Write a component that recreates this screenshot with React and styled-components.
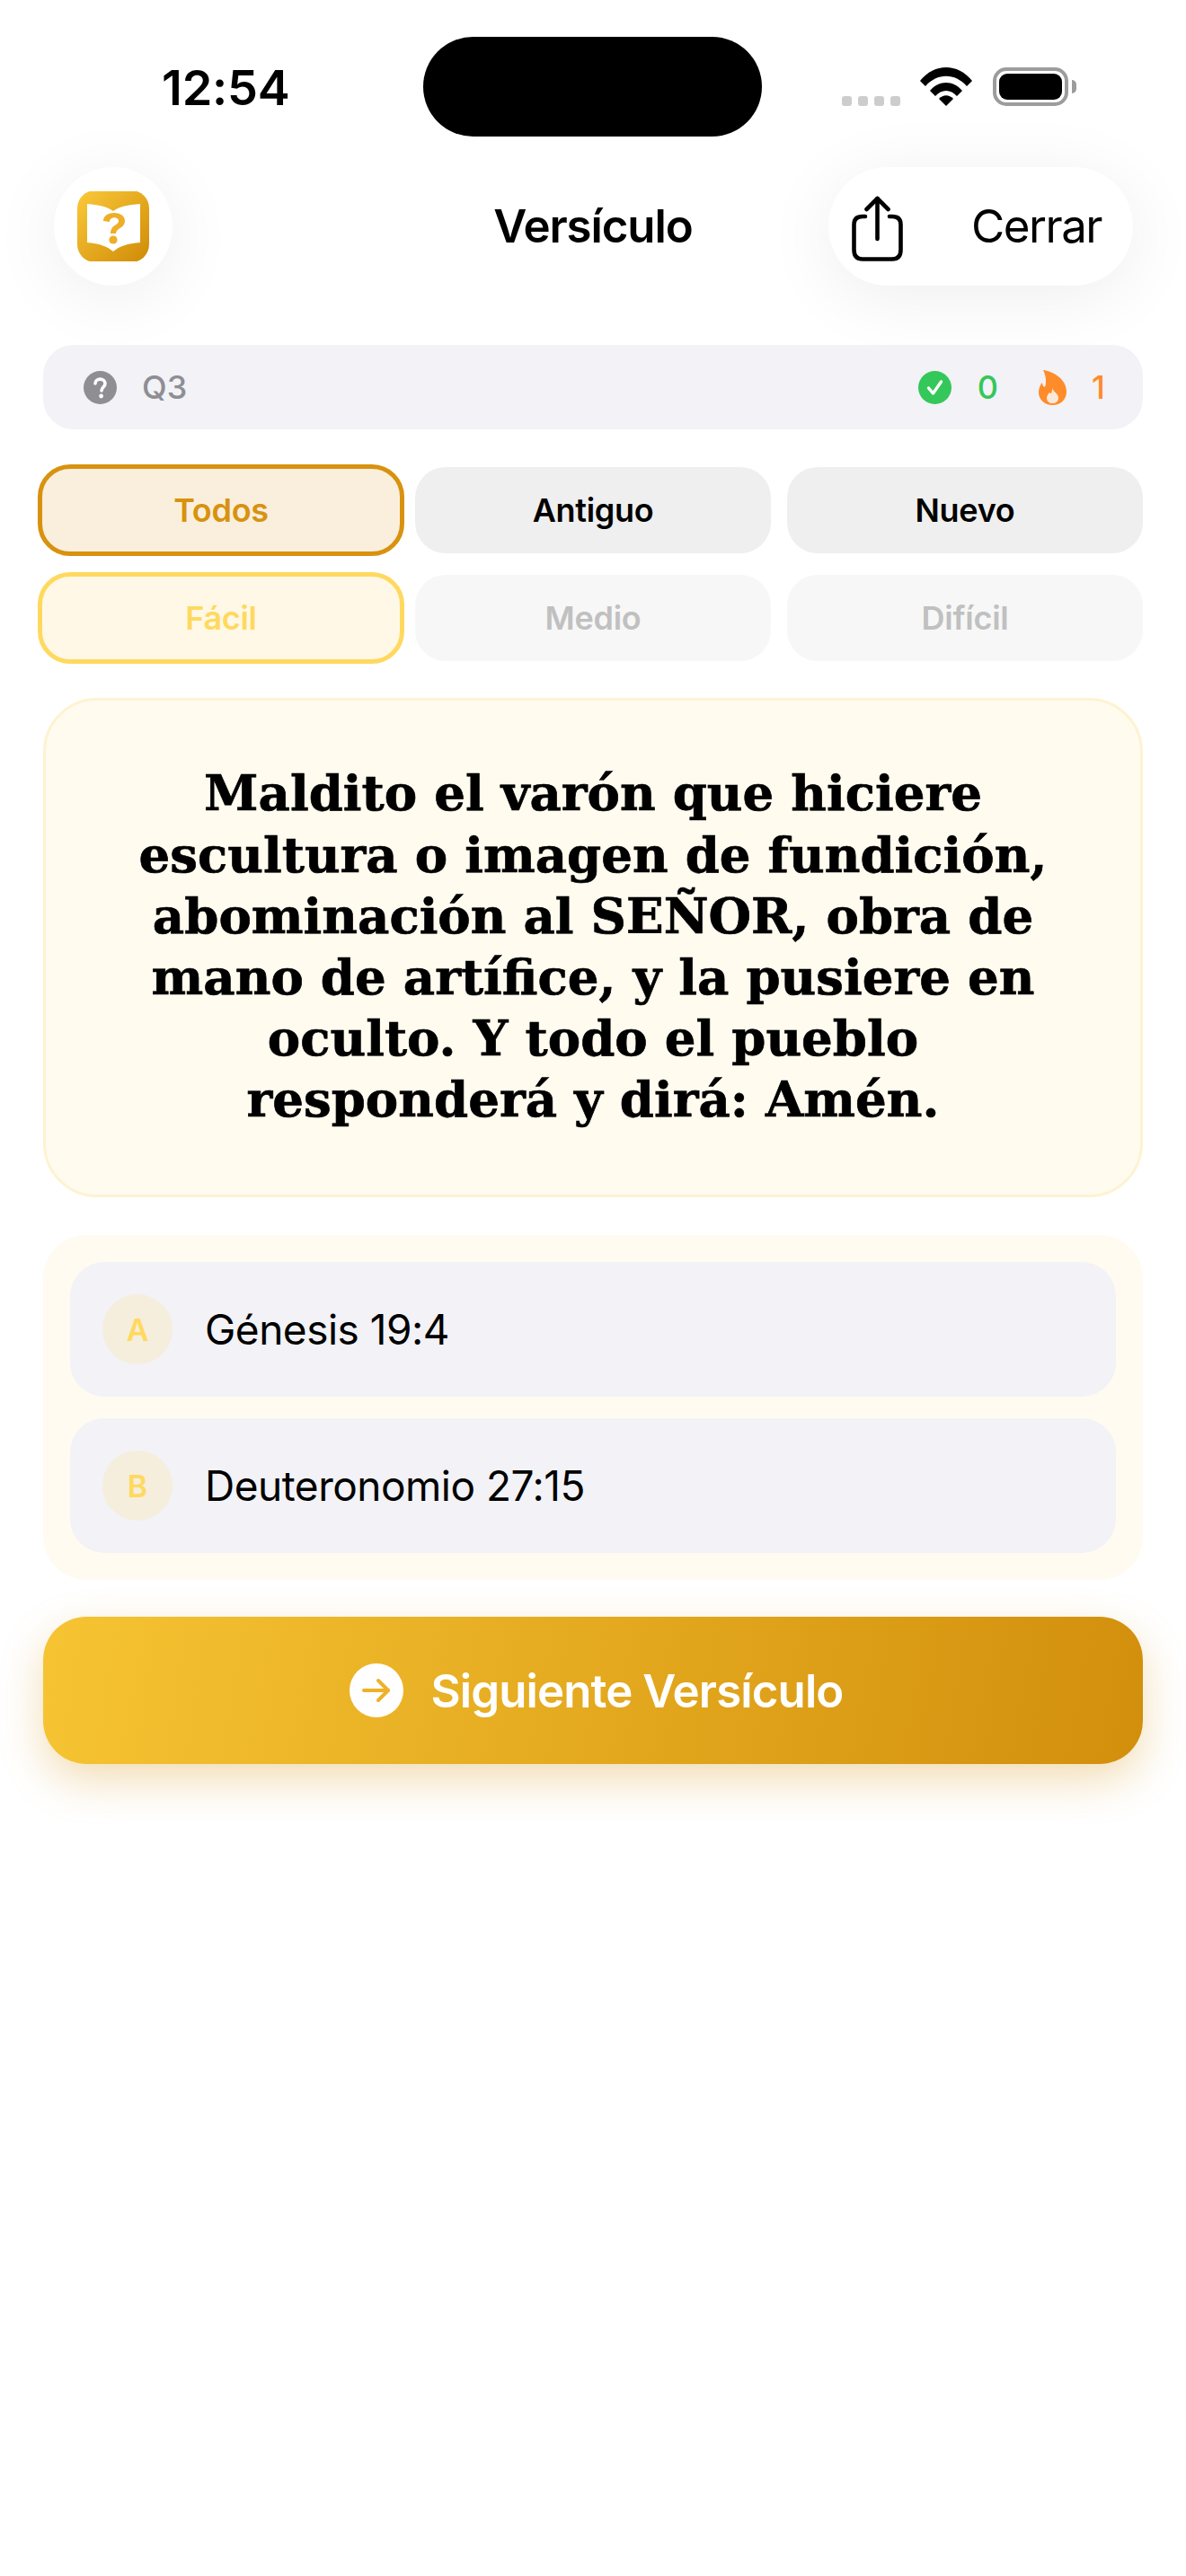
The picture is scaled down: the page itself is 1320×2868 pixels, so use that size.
import React from 'react';
import styled, { createGlobalStyle } from 'styled-components';

const GlobalStyle = createGlobalStyle`
  html, body {
    margin: 0;
    padding: 0;
    background: #fff;
  }
  * {
    box-sizing: border-box;
  }
`;

const Page = styled.div`
  width: 1320px;
  height: 2868px;
  background: #fff;
  font-family: Inter, 'Liberation Sans', sans-serif;
  color: #000;
  overflow: hidden;
`;

const StatusBar = styled.div`
  height: 186px;
  padding-top: 41px;
  margin-bottom: -186px;
  display: flex;
  align-items: flex-start;
`;

const Clock = styled.div`
  width: 471px;
  padding-left: 180px;
  font-size: 54px;
  line-height: 56px;
  margin-top: 29px;
  font-weight: 600;
  letter-spacing: -0.2px;
`;

const Island = styled.div`
  width: 377px;
  height: 111px;
  border-radius: 56px;
  background: #000;
`;

const StatusIcons = styled.div`
  display: flex;
  align-items: flex-end;
  margin-left: 89px;
  margin-top: 34px;
`;

const SignalDots = styled.div`
  display: flex;
  gap: 7px;
  margin-right: 22px;
`;

const SignalDot = styled.div`
  width: 11px;
  height: 11px;
  border-radius: 3px;
  background: #cdcdcd;
`;

const Battery = styled.div`
  position: relative;
  width: 84px;
  height: 43px;
  margin-left: 23px;
  padding: 3px 3px;
  border: 4px solid #9c9c9c;
  border-radius: 15px;
  background: #fff;
`;

const BatteryFill = styled.div`
  width: 100%;
  height: 100%;
  background: #000;
  border-radius: 9px;
`;

const BatteryCap = styled.div`
  position: absolute;
  right: -13px;
  top: 10px;
  width: 5px;
  height: 15px;
  border-radius: 0 5px 5px 0;
  background: #9c9c9c;
`;

const Header = styled.header`
  position: relative;
  z-index: 1;
  padding: 186px 60px 0;
  height: 318px;
  display: flex;
  align-items: center;
  justify-content: space-between;
`;

const LogoButton = styled.div`
  width: 132px;
  height: 132px;
  border-radius: 50%;
  background: #fff;
  box-shadow: 0 12px 80px rgba(0, 0, 0, 0.07);
  display: flex;
  align-items: center;
  justify-content: center;
`;

const Title = styled.h1`
  position: absolute;
  left: 0;
  right: 0;
  bottom: 39px;
  margin: 0;
  text-align: center;
  font-size: 51px;
  line-height: 54px;
  font-weight: 600;
  letter-spacing: -1.1px;
`;

const ActionPill = styled.div`
  width: 339px;
  height: 132px;
  margin-right: -1px;
  border-radius: 66px;
  background: #fff;
  box-shadow: 0 12px 80px rgba(0, 0, 0, 0.07);
  display: flex;
  align-items: center;
  padding-left: 26px;

  svg {
    margin-top: 5px;
  }
`;

const CloseLabel = styled.span`
  margin-left: 76px;
  font-size: 51px;
  line-height: 54px;
  font-weight: 400;
  letter-spacing: -1.5px;
`;

const Content = styled.main`
  padding: 66px 48px 0;
  display: flex;
  flex-direction: column;
`;

const StatsBar = styled.div`
  height: 94px;
  border-radius: 34px;
  background: #f2f2f7;
  padding: 0 42px 0 45px;
  display: flex;
  align-items: center;
  justify-content: space-between;
`;

const StatGroup = styled.div`
  display: flex;
  align-items: center;
`;

const StatValue = styled.span`
  font-size: 36px;
  line-height: 40px;
  font-weight: 500;
  color: ${(p) => p.$color};
  margin-left: ${(p) => p.$gap}px;
  margin-right: ${(p) => p.$after || 0}px;
`;

const Filters = styled.div`
  margin-top: 42px;
  display: grid;
  grid-template-columns: repeat(3, 396px);
  grid-auto-rows: 96px;
  column-gap: 18px;
  row-gap: 24px;
`;

const chipVariants = {
  plain: 'background: #efefef; color: #000;',
  picked: `
    margin: -3px -6px;
    background: #f9efdc;
    color: #d8920f;
    border: 5px solid #d8920f;
    border-radius: 36px;
  `,
  muted: 'background: #f7f7f7; color: #c0c0c0;',
  mutedPicked: `
    margin: -3px -6px;
    background: #fff8e6;
    color: #ffd95f;
    border: 5px solid #ffd95f;
    border-radius: 36px;
  `,
};

const FilterChip = styled.div`
  display: flex;
  align-items: center;
  justify-content: center;
  border-radius: 34px;
  font-size: 36px;
  font-weight: 600;
  letter-spacing: -0.3px;
  ${(p) => chipVariants[p.$variant]}
`;

const VerseCard = styled.section`
  margin-top: 41px;
  height: 556px;
  border: 3px solid #fdf3d2;
  border-radius: 60px;
  background: #fffbef;
  display: flex;
  align-items: center;
  justify-content: center;
  padding: 0 30px 2px;
`;

const VerseText = styled.p`
  margin: 0;
  text-align: center;
  font-family: 'DejaVu Serif', Georgia, serif;
  font-weight: 700;
  font-size: 54.6px;
  line-height: 68.2px;
  -webkit-text-stroke: 0.7px #000;
  color: #000;
`;

const AnswersPanel = styled.section`
  margin-top: 42px;
  padding: 30px;
  border-radius: 48px;
  background: #fffbf0;
  display: flex;
  flex-direction: column;
  gap: 24px;
`;

const AnswerRow = styled.div`
  height: 150px;
  border-radius: 38px;
  background: #f2f2f7;
  padding-left: 36px;
  display: flex;
  align-items: center;
  gap: 36px;
`;

const AnswerLetter = styled.div`
  width: 78px;
  height: 78px;
  border-radius: 50%;
  background: #f5eedd;
  color: #ffd95f;
  font-size: 34px;
  font-weight: 600;
  display: flex;
  align-items: center;
  justify-content: center;
`;

const AnswerText = styled.span`
  font-size: 46px;
  line-height: 54px;
  font-weight: 400;
  letter-spacing: -0.5px;
`;

const NextButton = styled.div`
  margin-top: 41px;
  height: 164px;
  border-radius: 48px;
  background: linear-gradient(100deg, #f6c433 0%, #d28f0c 100%);
  box-shadow: 0 18px 48px rgba(212, 144, 10, 0.3);
  color: #fff;
  padding-left: 8px;
  display: flex;
  align-items: center;
  justify-content: center;
  gap: 30px;
  font-size: 51px;
  font-weight: 600;
  letter-spacing: -0.9px;
`;

const ArrowCircle = styled.div`
  width: 60px;
  height: 60px;
  border-radius: 50%;
  background: #fff;
  display: flex;
  align-items: center;
  justify-content: center;
`;

function WifiIcon() {
  return (
    <svg width="58" height="43" viewBox="0 0 58 43">
      <path d="M0 15 C16 -5 42 -5 58 15 L52 21 C39 6 19 6 6 21 Z" fill="#000" />
      <path d="M11 26 C21 14 37 14 47 26 L41 32 C34 24 24 24 17 32 Z" fill="#000" />
      <path d="M21 35 C26 30 32 30 37 35 L29 43 Z" fill="#000" />
    </svg>
  );
}

function ShareIcon() {
  return (
    <svg width="57" height="73" viewBox="0 0 57 73" fill="none" stroke="#000" strokeWidth="4.6" strokeLinecap="round" strokeLinejoin="round">
      <path d="M15 23 H12 C6 23 2.5 26 2.5 32 V60 C2.5 67 6 70.5 12 70.5 H45 C51 70.5 54.5 67 54.5 60 V32 C54.5 26 51 23 45 23 H42" />
      <path d="M28.5 48 V3" />
      <path d="M16.5 15 L28.5 3 L40.5 15" />
    </svg>
  );
}

function BookLogo() {
  return (
    <svg width="80" height="78" viewBox="0 0 80 78">
      <defs>
        <linearGradient id="logoGold" x1="0" y1="0" x2="1" y2="1">
          <stop offset="0" stopColor="#fbc93a" />
          <stop offset="1" stopColor="#cf8b06" />
        </linearGradient>
      </defs>
      <rect x="0" y="-1" width="80" height="80" rx="20" fill="url(#logoGold)" />
      <path d="M11 14 C24 15 33 17 40 22 C47 17 56 15 70 14 V57 C56 58 47 61 40 67 C33 61 24 58 11 57 Z" fill="#fff" />
      <path d="M29 33 C29 21 53 21 53 33 C53 41 43 41 43 47 H37 C37 37 46 38 46 33 C46 28 36 28 36 34 Z" fill="#eeae27" />
      <circle cx="40" cy="54" r="4.6" fill="#eeae27" />
    </svg>
  );
}

function HelpIcon() {
  return (
    <svg width="37" height="37" viewBox="0 0 37 37">
      <circle cx="18.5" cy="18.5" r="18.5" fill="#8e8e93" />
      <path d="M13 14 C13 7.5 24 7.5 24 14 C24 18 20 18 20 22" fill="none" stroke="#fff" strokeWidth="3.6" strokeLinecap="round" />
      <circle cx="19.6" cy="28" r="2.4" fill="#fff" />
    </svg>
  );
}

function CheckIcon() {
  return (
    <svg width="37" height="37" viewBox="0 0 37 37">
      <circle cx="18.5" cy="18.5" r="18.5" fill="#34c759" />
      <path d="M11.5 19 L16.5 25 L25.5 12" fill="none" stroke="#fff" strokeWidth="3.4" strokeLinecap="round" strokeLinejoin="round" />
    </svg>
  );
}

function FlameIcon() {
  return (
    <svg width="31" height="39" viewBox="0 0 31 39">
      <path d="M5 0 C14 1 31 9 31 24 C31 33 24 39 15.5 39 C7 39 0 33 0 25 C0 20 2 16 4 14 C4 17 5 18 7 19 C9 13 8 6 5 0 Z" fill="#ff8c2a" />
      <path d="M15 20 C16 24 22 26 22 31 C22 35 19 37 15.5 37 C12 37 9 35 9 31 C9 28 11 27 12 25 C13 26 14 26 14 26 C15 24 15 22 15 20 Z" fill="#fbe9d7" />
    </svg>
  );
}

function ArrowIcon() {
  return (
    <svg width="32" height="28" viewBox="0 0 32 28" fill="none" stroke="#eeb128" strokeWidth="4" strokeLinecap="round" strokeLinejoin="round">
      <path d="M2 14 H29" />
      <path d="M18 3 L29 14 L18 25" />
    </svg>
  );
}

const typeFilters = ['Todos', 'Antiguo', 'Nuevo'];
const levelFilters = ['Fácil', 'Medio', 'Difícil'];
const answers = [
  { letter: 'A', text: 'Génesis 19:4' },
  { letter: 'B', text: 'Deuteronomio 27:15' },
];

export default function App() {
  return (
    <Page>
      <GlobalStyle />
      <StatusBar>
        <Clock>12:54</Clock>
        <Island />
        <StatusIcons>
          <SignalDots>
            <SignalDot />
            <SignalDot />
            <SignalDot />
            <SignalDot />
          </SignalDots>
          <WifiIcon />
          <Battery>
            <BatteryFill />
            <BatteryCap />
          </Battery>
        </StatusIcons>
      </StatusBar>
      <Header>
        <LogoButton>
          <BookLogo />
        </LogoButton>
        <Title>Versículo</Title>
        <ActionPill>
          <ShareIcon />
          <CloseLabel>Cerrar</CloseLabel>
        </ActionPill>
      </Header>
      <Content>
        <StatsBar>
          <StatGroup>
            <HelpIcon />
            <StatValue $color="#8e8e93" $gap={28}>Q3</StatValue>
          </StatGroup>
          <StatGroup>
            <CheckIcon />
            <StatValue $color="#34c759" $gap={29} $after={45}>0</StatValue>
            <FlameIcon />
            <StatValue $color="#ff8c2a" $gap={28}>1</StatValue>
          </StatGroup>
        </StatsBar>
        <Filters>
          {typeFilters.map((name, i) => (
            <FilterChip key={name} $variant={i === 0 ? 'picked' : 'plain'}>{name}</FilterChip>
          ))}
          {levelFilters.map((name, i) => (
            <FilterChip key={name} $variant={i === 0 ? 'mutedPicked' : 'muted'}>{name}</FilterChip>
          ))}
        </Filters>
        <VerseCard>
          <VerseText>
            Maldito el varón que hiciere<br />
            escultura o imagen de fundición,<br />
            abominación al SEÑOR, obra de<br />
            mano de artífice, y la pusiere en<br />
            oculto. Y todo el pueblo<br />
            responderá y dirá: Amén.
          </VerseText>
        </VerseCard>
        <AnswersPanel>
          {answers.map((a) => (
            <AnswerRow key={a.letter}>
              <AnswerLetter>{a.letter}</AnswerLetter>
              <AnswerText>{a.text}</AnswerText>
            </AnswerRow>
          ))}
        </AnswersPanel>
        <NextButton>
          <ArrowCircle>
            <ArrowIcon />
          </ArrowCircle>
          Siguiente Versículo
        </NextButton>
      </Content>
    </Page>
  );
}
